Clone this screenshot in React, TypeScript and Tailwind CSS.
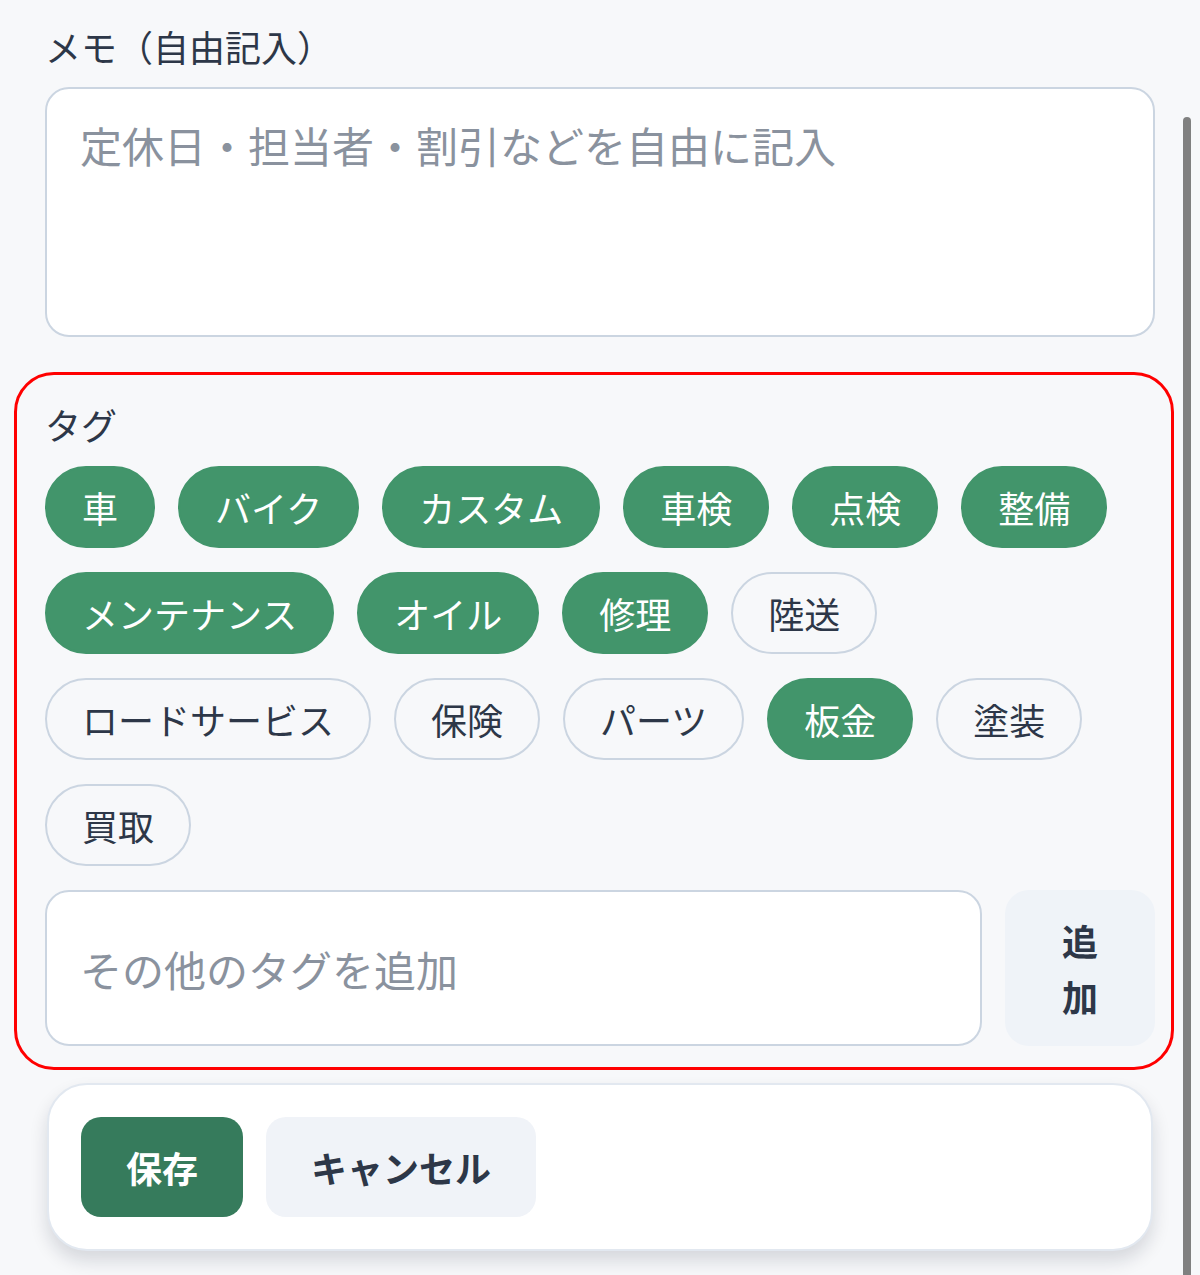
import { useState } from "react";

const TAGS: { label: string; selected: boolean }[] = [
  { label: "車", selected: true },
  { label: "バイク", selected: true },
  { label: "カスタム", selected: true },
  { label: "車検", selected: true },
  { label: "点検", selected: true },
  { label: "整備", selected: true },
  { label: "メンテナンス", selected: true },
  { label: "オイル", selected: true },
  { label: "修理", selected: true },
  { label: "陸送", selected: false },
  { label: "ロードサービス", selected: false },
  { label: "保険", selected: false },
  { label: "パーツ", selected: false },
  { label: "板金", selected: true },
  { label: "塗装", selected: false },
  { label: "買取", selected: false },
];

function TagPill({ label, selected, onClick }: { label: string; selected: boolean; onClick: () => void }) {
  return (
    <button
      type="button"
      onClick={onClick}
      className={
        selected
          ? "rounded-full border-2 border-[#42956b] bg-[#42956b] px-[35px] py-[12px] text-[36px] leading-[54px] text-white"
          : "rounded-full border-2 border-[#cbd5e1] bg-transparent px-[35px] py-[12px] text-[36px] leading-[54px] text-[#2d3748]"
      }
    >
      {label}
    </button>
  );
}

export default function App() {
  const [tags, setTags] = useState(TAGS);

  const toggle = (i: number) =>
    setTags((prev) => prev.map((t, j) => (j === i ? { ...t, selected: !t.selected } : t)));

  return (
    <div
      className="relative min-h-[1275px] overflow-hidden bg-[#f7f8fa] pt-[19px] text-[#2d3748]"
      style={{ fontFamily: '"Noto Sans CJK JP", "Noto Sans", sans-serif' }}
    >
      {/* memo */}
      <div className="px-[45px]">
        <label className="block text-[36px] leading-[54px] font-normal text-[#2d3748]">メモ（自由記入）</label>
        <textarea
          placeholder="定休日・担当者・割引などを自由に記入"
          className="mt-[14px] block h-[250px] w-full resize-none rounded-[24px] border-2 border-[#cbd5e1] bg-white px-[33px] pt-[24px] text-[42px] leading-[63px] outline-none placeholder:text-[#8a929e]"
        />
      </div>

      {/* tags */}
      <section className="mt-[35px] ml-[14px] w-[1160px] rounded-[40px] border-[3px] border-[#ff0000] pt-[22px] pr-[16px] pb-[21px] pl-[28px]">
        <div className="text-[36px] leading-[54px] font-normal">タグ</div>
        <div className="mt-[15px] flex flex-wrap gap-x-[23px] gap-y-[24px]">
          {tags.map((t, i) => (
            <TagPill key={t.label} label={t.label} selected={t.selected} onClick={() => toggle(i)} />
          ))}
        </div>
        <div className="mt-[24px] flex h-[156px] items-stretch gap-[23px]">
          <input
            placeholder="その他のタグを追加"
            className="min-w-0 flex-1 rounded-[24px] border-2 border-[#cbd5e1] bg-white px-[33px] text-[42px] outline-none placeholder:text-[#8a929e]"
          />
          <button
            type="button"
            className="w-[150px] shrink-0 rounded-[24px] bg-[#eff3f8] px-[40px] text-[36px] leading-[56px] font-bold text-[#2d3748]"
          >
            追加
          </button>
        </div>
      </section>

      {/* actions */}
      <div className="mx-[47px] mt-[13px] flex gap-[23px] rounded-[40px] border-2 border-[#e2e8f0] bg-white p-[32px] shadow-[0_10px_18px_rgba(15,23,42,0.14)]">
        <button
          type="button"
          className="rounded-[20px] bg-[#367b5c] px-[45px] py-[23px] text-[36px] leading-[54px] font-bold text-white"
        >
          保存
        </button>
        <button
          type="button"
          className="rounded-[20px] bg-[#f0f3f8] px-[45px] py-[23px] text-[36px] leading-[54px] font-bold text-[#2d3748]"
        >
          キャンセル
        </button>
      </div>

      {/* overlay scrollbar */}
      <div className="absolute top-[117px] right-[9px] h-[1200px] w-[8px] rounded-full bg-[#808080]" />
    </div>
  );
}
